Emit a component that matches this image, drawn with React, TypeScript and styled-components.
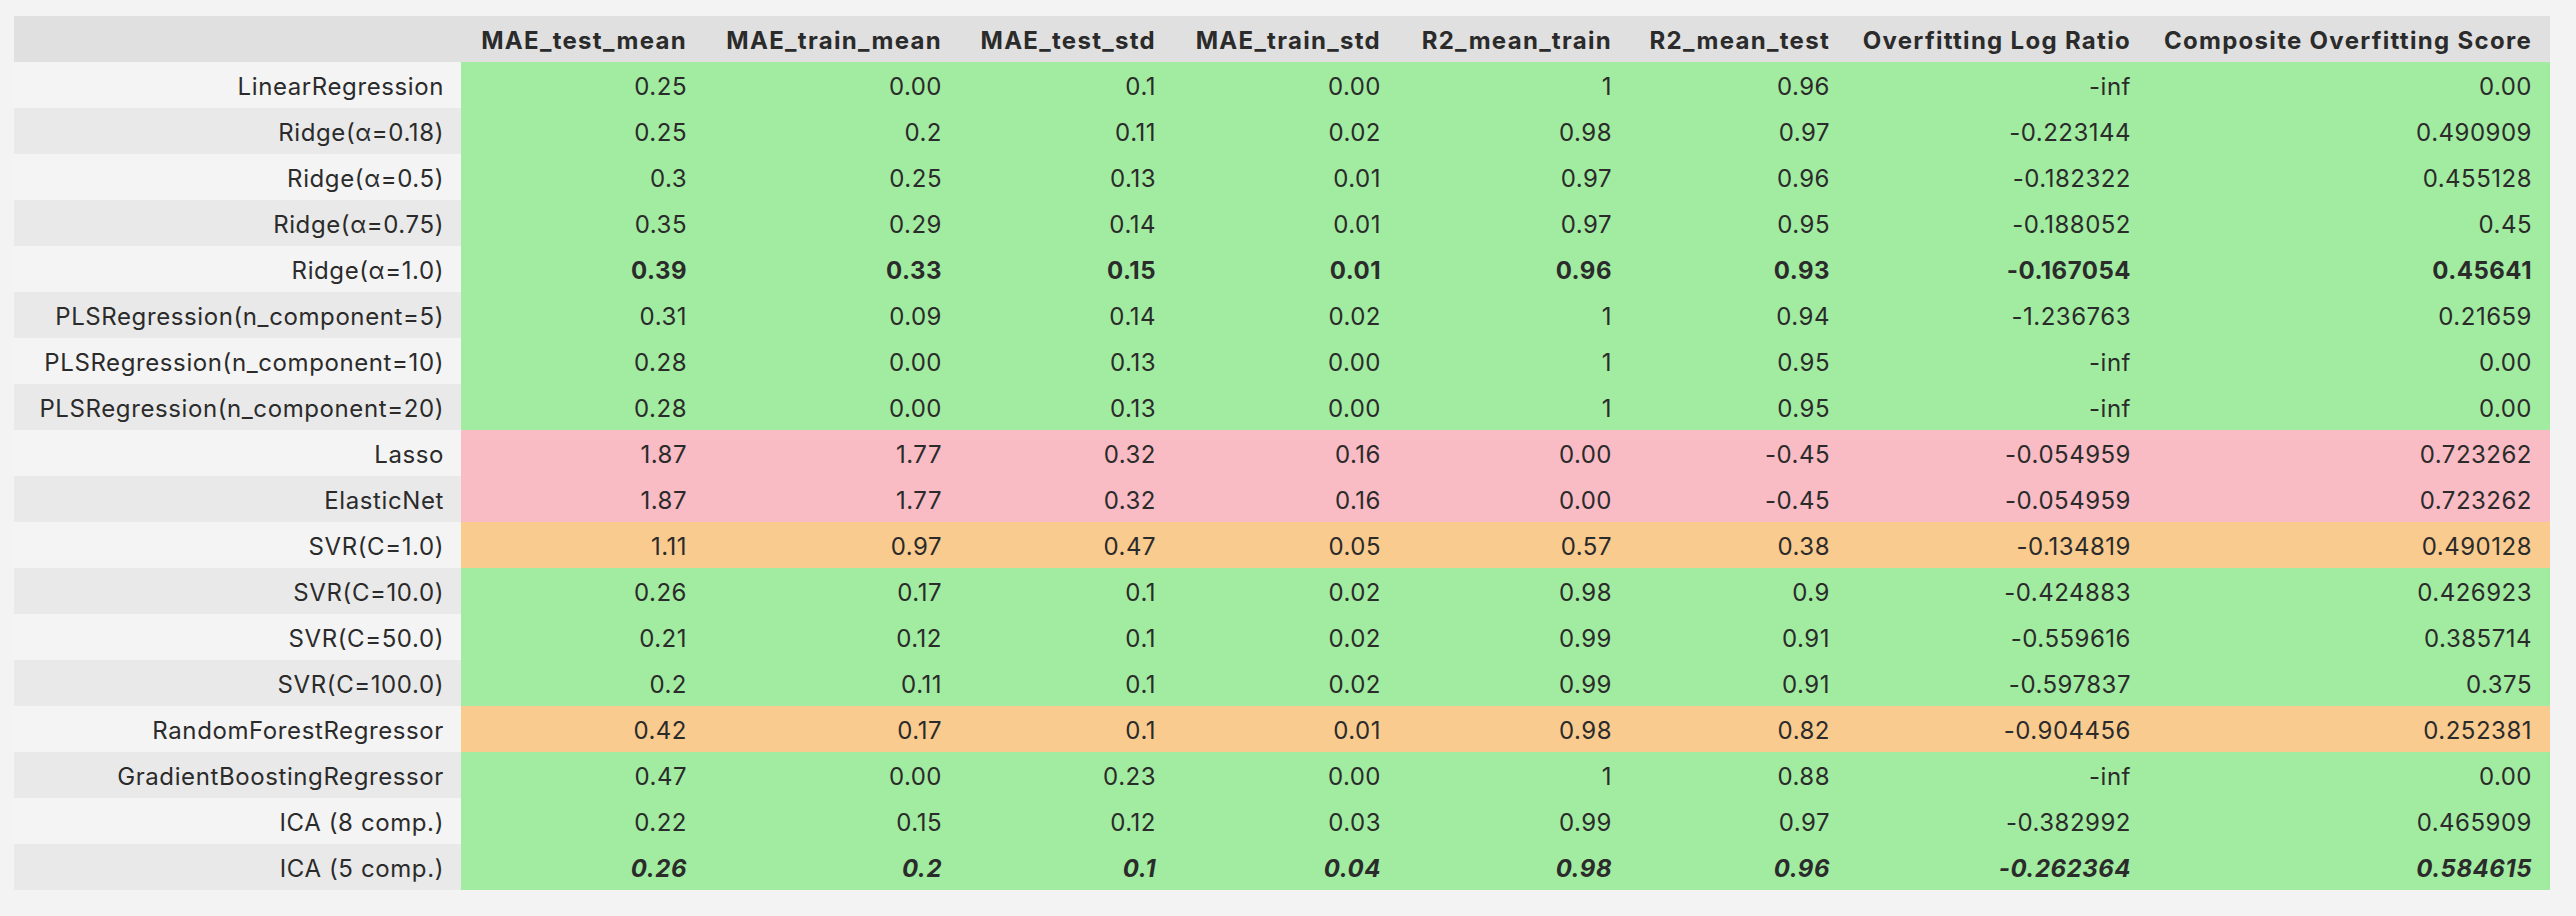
import React from "react";
import styled, { createGlobalStyle } from "styled-components";

const GlobalStyle = createGlobalStyle`
  html, body {
    margin: 0;
    padding: 0;
    background: #f3f3f3;
  }
  body {
    font-family: Inter, "Noto Sans", "Liberation Sans", sans-serif;
    color: #2b2b2b;
  }
`;

type Tone = "green" | "pink" | "orange";
type Emph = "normal" | "bold" | "boldItalic";

interface Row {
  name: string;
  values: string[];
  tone: Tone;
  emph?: Emph;
}

const toneColor: Record<Tone, string> = {
  green: "#a1eca0",
  pink: "#f9bbc4",
  orange: "#facb8f",
};

const columns = [
  { label: "MAE_test_mean", width: 244 },
  { label: "MAE_train_mean", width: 255 },
  { label: "MAE_test_std", width: 214 },
  { label: "MAE_train_std", width: 225 },
  { label: "R2_mean_train", width: 231 },
  { label: "R2_mean_test", width: 218 },
  { label: "Overfitting Log Ratio", width: 301 },
  { label: "Composite Overfitting Score", width: 401 },
];

const rows: Row[] = [
  { name: "LinearRegression", values: ["0.25", "0.00", "0.1", "0.00", "1", "0.96", "-inf", "0.00"], tone: "green" },
  { name: "Ridge(α=0.18)", values: ["0.25", "0.2", "0.11", "0.02", "0.98", "0.97", "-0.223144", "0.490909"], tone: "green" },
  { name: "Ridge(α=0.5)", values: ["0.3", "0.25", "0.13", "0.01", "0.97", "0.96", "-0.182322", "0.455128"], tone: "green" },
  { name: "Ridge(α=0.75)", values: ["0.35", "0.29", "0.14", "0.01", "0.97", "0.95", "-0.188052", "0.45"], tone: "green" },
  { name: "Ridge(α=1.0)", values: ["0.39", "0.33", "0.15", "0.01", "0.96", "0.93", "-0.167054", "0.45641"], tone: "green", emph: "bold" },
  { name: "PLSRegression(n_component=5)", values: ["0.31", "0.09", "0.14", "0.02", "1", "0.94", "-1.236763", "0.21659"], tone: "green" },
  { name: "PLSRegression(n_component=10)", values: ["0.28", "0.00", "0.13", "0.00", "1", "0.95", "-inf", "0.00"], tone: "green" },
  { name: "PLSRegression(n_component=20)", values: ["0.28", "0.00", "0.13", "0.00", "1", "0.95", "-inf", "0.00"], tone: "green" },
  { name: "Lasso", values: ["1.87", "1.77", "0.32", "0.16", "0.00", "-0.45", "-0.054959", "0.723262"], tone: "pink" },
  { name: "ElasticNet", values: ["1.87", "1.77", "0.32", "0.16", "0.00", "-0.45", "-0.054959", "0.723262"], tone: "pink" },
  { name: "SVR(C=1.0)", values: ["1.11", "0.97", "0.47", "0.05", "0.57", "0.38", "-0.134819", "0.490128"], tone: "orange" },
  { name: "SVR(C=10.0)", values: ["0.26", "0.17", "0.1", "0.02", "0.98", "0.9", "-0.424883", "0.426923"], tone: "green" },
  { name: "SVR(C=50.0)", values: ["0.21", "0.12", "0.1", "0.02", "0.99", "0.91", "-0.559616", "0.385714"], tone: "green" },
  { name: "SVR(C=100.0)", values: ["0.2", "0.11", "0.1", "0.02", "0.99", "0.91", "-0.597837", "0.375"], tone: "green" },
  { name: "RandomForestRegressor", values: ["0.42", "0.17", "0.1", "0.01", "0.98", "0.82", "-0.904456", "0.252381"], tone: "orange" },
  { name: "GradientBoostingRegressor", values: ["0.47", "0.00", "0.23", "0.00", "1", "0.88", "-inf", "0.00"], tone: "green" },
  { name: "ICA (8 comp.)", values: ["0.22", "0.15", "0.12", "0.03", "0.99", "0.97", "-0.382992", "0.465909"], tone: "green" },
  { name: "ICA (5 comp.)", values: ["0.26", "0.2", "0.1", "0.04", "0.98", "0.96", "-0.262364", "0.584615"], tone: "green", emph: "boldItalic" },
];

const Page = styled.div`
  padding: 16px 26px 26px 14px;
  min-height: 916px;
  box-sizing: border-box;
  background: #f3f3f3;
`;

const Table = styled.table`
  border-collapse: collapse;
  border-spacing: 0;
  table-layout: fixed;
  width: 2536px;
  font-size: 24px;
  color: #2b2b2b;
`;

const HeadRow = styled.tr`
  background: #e0e0e0;
`;

const HeadCell = styled.th`
  height: 46px;
  padding: 2px 18px 0 0;
  box-sizing: border-box;
  text-align: right;
  font-weight: 700;
  letter-spacing: 1.3px;
  white-space: nowrap;
  vertical-align: middle;
`;

const IndexCell = styled.th<{ $stripe: boolean }>`
  height: 46px;
  padding: 2px 17px 0 0;
  box-sizing: border-box;
  text-align: right;
  font-weight: 400;
  letter-spacing: 0.6px;
  white-space: nowrap;
  background: ${(p) => (p.$stripe ? "#e9e9e9" : "#f4f4f4")};
`;

const DataCell = styled.td<{ $tone: Tone; $emph: Emph }>`
  height: 46px;
  padding: 2px 18px 0 0;
  box-sizing: border-box;
  text-align: right;
  white-space: nowrap;
  letter-spacing: 0.5px;
  background: ${(p) => toneColor[p.$tone]};
  font-weight: ${(p) => (p.$emph === "normal" ? 400 : 700)};
  font-style: ${(p) => (p.$emph === "boldItalic" ? "italic" : "normal")};
`;

export default function App() {
  return (
    <Page>
      <GlobalStyle />
      <Table>
        <colgroup>
          <col style={{ width: 447 }} />
          {columns.map((c) => (
            <col key={c.label} style={{ width: c.width }} />
          ))}
        </colgroup>
        <thead>
          <HeadRow>
            <HeadCell />
            {columns.map((c) => (
              <HeadCell key={c.label}>{c.label}</HeadCell>
            ))}
          </HeadRow>
        </thead>
        <tbody>
          {rows.map((r, i) => (
            <tr key={r.name}>
              <IndexCell $stripe={i % 2 === 1}>{r.name}</IndexCell>
              {r.values.map((v, j) => (
                <DataCell key={j} $tone={r.tone} $emph={r.emph ?? "normal"}>
                  {v}
                </DataCell>
              ))}
            </tr>
          ))}
        </tbody>
      </Table>
    </Page>
  );
}
